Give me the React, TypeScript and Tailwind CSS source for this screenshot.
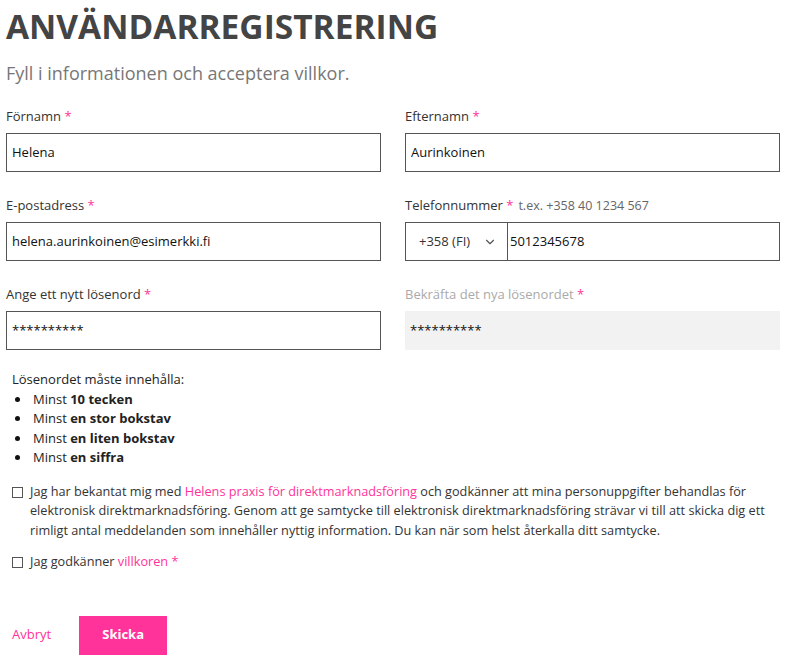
import { ChevronDown } from 'lucide-react'

const font = { fontFamily: '"Open Sans", "Liberation Sans", sans-serif' }

function Label({ text, muted, hint }: { text: string; muted?: boolean; hint?: string }) {
  return (
    <div className={`h-[20px] text-[13px] leading-[20px] ${muted ? 'text-[#aaaaaa]' : 'text-[#333333]'}`}>
      {text} <span className="text-[#ff3399]">*</span>
      {hint && <span className="ml-[5px] text-[12.5px] text-[#666666]">{hint}</span>}
    </div>
  )
}

function Field({ label, value, muted }: { label: string; value: string; muted?: boolean }) {
  return (
    <div className="flex flex-col">
      <Label text={label} muted={muted} />
      <div
        className={`mt-[7px] flex h-[39px] items-center px-[5px] text-[13px] text-[#111111] ${
          muted ? 'bg-[#f2f2f2]' : 'border border-[#555555] bg-white'
        }`}
      >
        {value}
      </div>
    </div>
  )
}

function Bullet({ children }: { children: React.ReactNode }) {
  return (
    <li className="flex items-center">
      <span className="ml-[3px] mr-[13px] h-[5px] w-[5px] rounded-full bg-[#111111]" />
      <span>
        Minst <b>{children}</b>
      </span>
    </li>
  )
}

export default function App() {
  return (
    <div className="min-h-screen bg-white px-[6px] pt-[6px]" style={font}>
      <h1 className="text-[33.5px] font-bold leading-[40px] text-[#444444]">ANVÄNDARREGISTRERING</h1>
      <p className="mt-[15px] text-[18px] leading-[24px] text-[#777777]">Fyll i informationen och acceptera villkor.</p>

      <div className="mt-[21px] grid w-[774px] grid-cols-2 gap-x-[24px] gap-y-[23px]">
        <Field label="Förnamn" value="Helena" />
        <Field label="Efternamn" value="Aurinkoinen" />
        <Field label="E-postadress" value="helena.aurinkoinen@esimerkki.fi" />
        <div className="flex flex-col">
          <Label text="Telefonnummer" hint="t.ex. +358 40 1234 567" />
          <div className="mt-[7px] flex h-[39px] border border-[#555555]">
            <div className="flex w-[102px] items-center justify-between border-r border-[#555555] pl-[13px] pr-[10px] text-[13px] text-[#333333]">
              +358 (FI)
              <ChevronDown size={14} strokeWidth={2} className="text-[#555555]" />
            </div>
            <div className="flex items-center px-[2px] text-[13px] text-[#111111]">5012345678</div>
          </div>
        </div>
        <Field label="Ange ett nytt lösenord" value="**********" />
        <Field label="Bekräfta det nya lösenordet" value="**********" muted />
      </div>

      <div className="mt-[20px] pl-[6px] text-[13px] leading-[19.5px] text-[#222222]">
        <p>Lösenordet måste innehålla:</p>
        <ul>
          <Bullet>10 tecken</Bullet>
          <Bullet>en stor bokstav</Bullet>
          <Bullet>en liten bokstav</Bullet>
          <Bullet>en siffra</Bullet>
        </ul>
      </div>

      <div className="mt-[14px] flex flex-col gap-[12px] pl-[6px] text-[12.7px] leading-[19.5px] text-[#333333]">
        <div className="flex">
          <span className="mt-[5px] h-[11px] w-[11px] shrink-0 border border-[#555555]" />
          <p className="ml-[7px] w-[754px]">
            Jag har bekantat mig med <span className="text-[#ff3399]">Helens praxis för direktmarknadsföring</span> och godkänner att mina personuppgifter behandlas för elektronisk direktmarknadsföring. Genom att ge samtycke till elektronisk direktmarknadsföring strävar vi till att skicka dig ett rimligt antal meddelanden som innehåller nyttig information. Du kan när som helst återkalla ditt samtycke.
          </p>
        </div>
        <div className="flex">
          <span className="mt-[5px] h-[11px] w-[11px] shrink-0 border border-[#555555]" />
          <p className="ml-[7px]">
            Jag godkänner <span className="text-[#ff3399]">villkoren</span> <span className="text-[#ff3399]">*</span>
          </p>
        </div>
      </div>

      <div className="mt-[44px] flex items-center pl-[6px]">
        <button className="text-[13px] text-[#ff3399]">Avbryt</button>
        <button className="ml-[28px] h-[39px] w-[88px] bg-[#ff3399] text-[13px] font-bold text-white">Skicka</button>
      </div>
    </div>
  )
}
